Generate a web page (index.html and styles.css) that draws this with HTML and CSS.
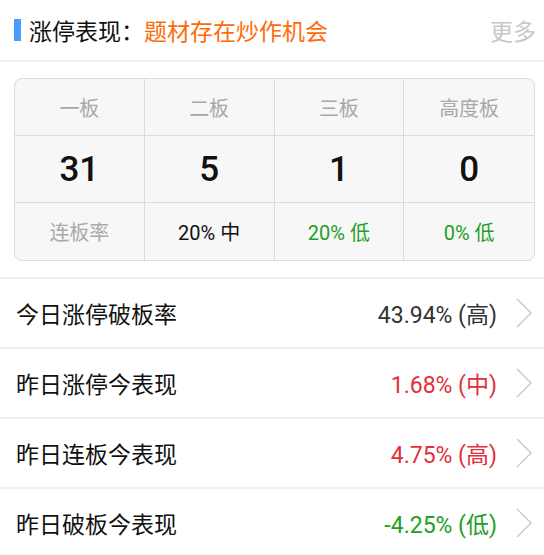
FILE: index.html
```html
<!DOCTYPE html>
<html lang="zh">
<head>
<meta charset="utf-8">
<link rel="stylesheet" href="styles.css">
</head>
<body>
<div class="header">
  <span class="bar"></span>
  <span class="title">涨停表现：</span><span class="theme">题材存在炒作机会</span>
  <span class="more">更多</span>
</div>
<div class="table">
  <div class="cell head">一板</div>
  <div class="cell head">二板</div>
  <div class="cell head">三板</div>
  <div class="cell head">高度板</div>
  <div class="cell num">31</div>
  <div class="cell num">5</div>
  <div class="cell num">1</div>
  <div class="cell num">0</div>
  <div class="cell foot muted">连板率</div>
  <div class="cell foot">20% 中</div>
  <div class="cell foot green">20% 低</div>
  <div class="cell foot green">0% 低</div>
</div>
<div class="list">
  <div class="row"><span class="label">今日涨停破板率</span><span class="value dark">43.94% (高)</span><svg class="chev" viewBox="0 0 16 30"><polyline points="1,1 15,15 1,29"/></svg></div>
  <div class="row"><span class="label">昨日涨停今表现</span><span class="value red">1.68% (中)</span><svg class="chev" viewBox="0 0 16 30"><polyline points="1,1 15,15 1,29"/></svg></div>
  <div class="row"><span class="label">昨日连板今表现</span><span class="value red">4.75% (高)</span><svg class="chev" viewBox="0 0 16 30"><polyline points="1,1 15,15 1,29"/></svg></div>
  <div class="row"><span class="label">昨日破板今表现</span><span class="value green">-4.25% (低)</span><svg class="chev" viewBox="0 0 16 30"><polyline points="1,1 15,15 1,29"/></svg></div>
</div>
</body>
</html>
```
FILE: styles.css
```css
html, body {
  margin: 0;
  padding: 0;
  background: #ffffff;
  font-family: Roboto, "Noto Sans CJK SC", sans-serif;
  color: #111;
}
.header {
  height: 60px;
  display: flex;
  align-items: center;
  padding: 0 8px 0 14px;
  border-bottom: 2px solid #f2f2f2;
  font-size: 23px;
}
.bar {
  width: 7px;
  height: 22px;
  background: #4a9bff;
  margin-right: 8px;
}
.title { color: #111; }
.theme { color: #ff6a0a; }
.more { margin-left: auto; color: #c8c8c8; }
.table {
  margin: 16px 9px 0 14px;
  border: 1px solid #d6dbe7;
  border-radius: 8px;
  background: #f7f7f7;
  display: grid;
  grid-template-columns: repeat(4, 1fr);
  overflow: hidden;
}
.cell {
  display: flex;
  align-items: center;
  justify-content: center;
  border-right: 1px solid #d6dbe7;
  border-bottom: 1px solid #d6dbe7;
}
.cell:nth-child(4n) { border-right: none; }
.cell:nth-child(n+9) { border-bottom: none; }
.head { height: 56px; font-size: 20px; color: #a8a8a8; }
.num { height: 66px; font-size: 35px; font-weight: 500; color: #111; }
.foot { height: 57px; font-size: 20px; color: #111; }
.muted { color: #aaaaaa; }
.green { color: #21a01e; }
.red { color: #e3303a; }
.dark { color: #333333; }
.list { margin-top: 16px; }
.row {
  height: 68px;
  border-top: 2px solid #efefef;
  display: flex;
  align-items: center;
  padding: 0 12px 0 16px;
}
.label { font-size: 23px; color: #111; }
.value { margin-left: auto; font-size: 23px; }
.chev {
  width: 16px;
  height: 30px;
  margin-left: 19px;
  fill: none;
  stroke: #c8c8c8;
  stroke-width: 1.4;
}
```
